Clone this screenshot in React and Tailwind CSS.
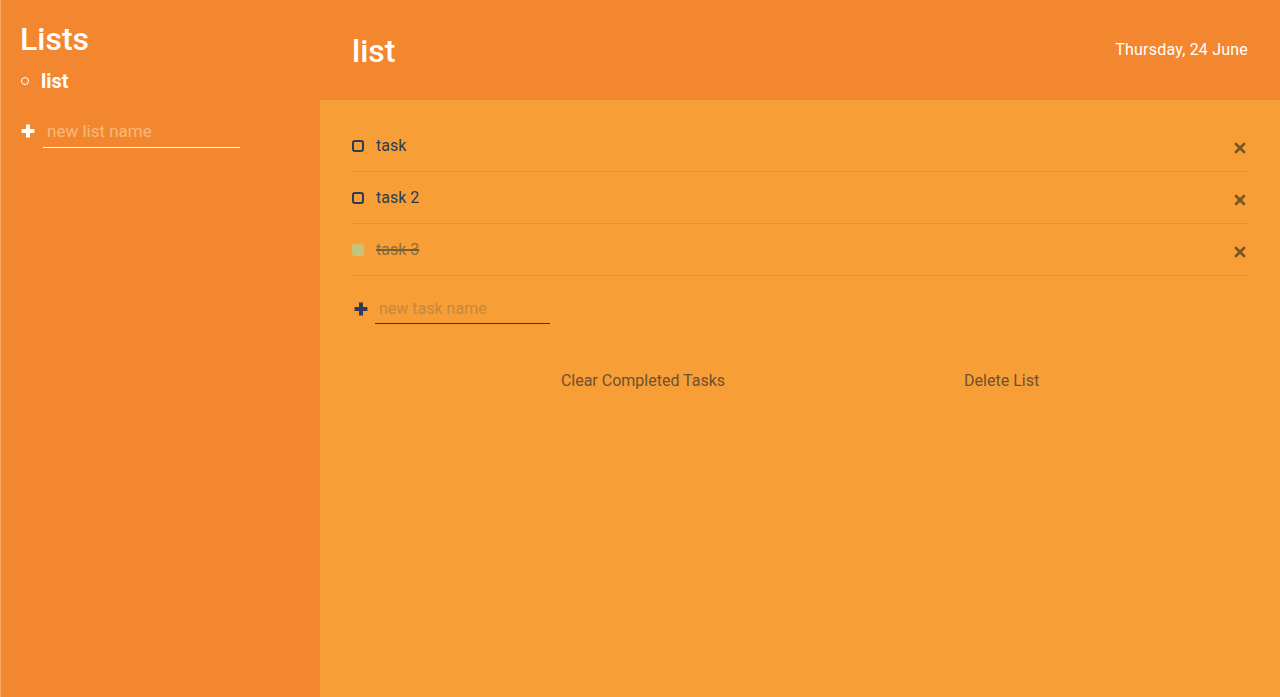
import { useState } from 'react';

const tasks = [
  { id: 1, name: 'task', done: false },
  { id: 2, name: 'task 2', done: false },
  { id: 3, name: 'task 3', done: true },
];

function Plus({ className }) {
  return (
    <svg viewBox="0 0 12 12" className={className} fill="currentColor">
      <path d="M4.3 0.5h3.4v3.8h3.8v3.4H7.7v3.8H4.3V7.7H0.5V4.3h3.8z" />
    </svg>
  );
}

function Cross() {
  return (
    <svg viewBox="0 0 12 12" className="w-[12px] h-[12px]" stroke="currentColor" strokeWidth="2.6" strokeLinecap="round">
      <path d="M2 2l8 8M10 2l-8 8" />
    </svg>
  );
}

export default function App() {
  const [listName, setListName] = useState('');
  const [taskName, setTaskName] = useState('');

  return (
    <div className="flex w-[1280px] h-[697px] font-['Roboto',sans-serif] bg-[#f79e36]">
      {/* Sidebar */}
      <aside className="w-[320px] shrink-0 bg-[#f3872f] border-l border-[#f6a868] pl-[19px] pt-[20px]">
        <h1 className="text-[32px] leading-[38px] font-medium text-white">Lists</h1>
        <ul className="mt-[10px]">
          <li className="flex items-center gap-[12px] h-[26px]">
            <span className="w-[8px] h-[8px] rounded-full border border-white ml-[1px]" />
            <span className="text-[20px] font-bold text-white">list</span>
          </li>
        </ul>
        <div className="flex items-center mt-[20px]">
          <Plus className="w-[14px] h-[14px] text-white ml-[1px]" />
          <input
            value={listName}
            onChange={(e) => setListName(e.target.value)}
            placeholder="new list name"
            className="ml-[8px] w-[197px] h-[34px] bg-transparent border-b border-white px-[4px] text-[17px] text-white placeholder:text-[#f8b97a] outline-none"
          />
        </div>
      </aside>

      {/* Main */}
      <main className="flex-1 flex flex-col">
        <header className="h-[100px] bg-[#f3872f] flex items-center justify-between px-[32px]">
          <h2 className="text-[32px] font-medium text-white mt-[2px]">list</h2>
          <span className="text-[16px] text-white tracking-[0.2px]">Thursday, 24 June</span>
        </header>

        <div className="px-[32px] pt-[20px]">
          {tasks.map((t) => (
            <div key={t.id} className="flex items-center h-[52px] border-b border-[#e4903a]">
              {t.done ? (
                <span className="w-[12px] h-[12px] rounded-[3px] bg-[#c4c47a]" />
              ) : (
                <span className="w-[12px] h-[12px] rounded-[3px] border-2 border-[#2d3a55]" />
              )}
              <span
                className={
                  t.done
                    ? 'ml-[12px] text-[16px] text-[#8c6e3c] line-through decoration-[#7e5e2c] decoration-2'
                    : 'ml-[12px] text-[16px] text-[#2d3a55]'
                }
              >
                {t.name}
              </span>
              <button className="ml-auto mr-[2px] mt-[4px] text-[#7a5226]">
                <Cross />
              </button>
            </div>
          ))}

          <div className="flex items-center mt-[18px]">
            <Plus className="w-[14px] h-[14px] text-[#2d3a55] ml-[2px]" />
            <input
              value={taskName}
              onChange={(e) => setTaskName(e.target.value)}
              placeholder="new task name"
              className="ml-[7px] w-[175px] h-[30px] bg-transparent border-b border-[#2d3a55] px-[4px] text-[16px] text-[#2d3a55] placeholder:text-[#c4893e] outline-none"
            />
          </div>

          <div className="flex justify-center gap-[239px] mt-[45px]">
            <button className="text-[16px] text-[#6e5032]">Clear Completed Tasks</button>
            <button className="text-[16px] text-[#6e5032]">Delete List</button>
          </div>
        </div>
      </main>
    </div>
  );
}
